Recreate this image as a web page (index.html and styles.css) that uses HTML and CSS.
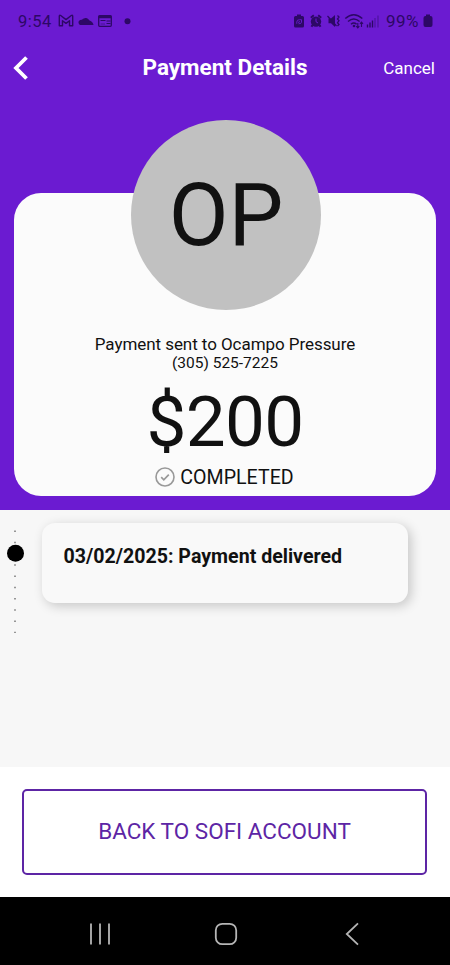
FILE: index.html
```html
<!DOCTYPE html>
<html lang="en">
<head>
<meta charset="utf-8">
<meta name="viewport" content="width=device-width, initial-scale=1">
<title>Payment Details</title>
<link rel="stylesheet" href="styles.css">
</head>
<body>
<div class="screen">
  <section class="hero">
    <div class="status">
      <span class="clock">9:54</span>
      <svg class="status-left" width="76" height="16" viewBox="0 0 76 16" fill="none" stroke="currentColor">
        <path d="M1.300 12.800V3.200q0-1.500 1.400-.7L8 6.600l5.300-4.100q1.400-.8 1.400.7v9.600h-3.200V7.700L8 10.400 4.500 7.700v5.100z" stroke-width="1.400" stroke-linejoin="round"/>
        <path d="M22 12a2.800 2.800 0 0 1-.6-4.600 3 3 0 0 1 2.600-.6 4.400 4.400 0 0 1 7.500.8Q35 8.700 35.500 12z" fill="currentColor" stroke="none"/>
        <rect x="40.700" y="2.700" width="12.600" height="10.600" rx="1" stroke-width="1.300"/>
        <path d="M40.500 4h13" stroke-width="2.500"/>
        <path d="M42.500 7.500h5M48.500 10.500h4M48.500 8h4" stroke-width="1.100"/>
        <path d="M42.500 11h4.500" stroke-width="1.100" opacity=".5"/>
        <circle cx="69.500" cy="8.200" r="3" fill="currentColor" stroke="none"/>
      </svg>
      <svg class="status-right" width="88" height="18" viewBox="0 0 88 18" fill="none" stroke="currentColor">
        <path d="M3 4V2.500h4V4h1.500q1.500 0 1.500 1.500v8.500q0 1.500-1.500 1.500h-7Q0 15.500 0 14V5.500Q0 4 1.500 4z" fill="currentColor" stroke="none"/>
        <path d="M2.800 11.800V10q0-2.300 2.700-2.300h2v2.500q0 1.600-3 1.600M4 10.500l2-1" stroke="#6b1bd1" stroke-width=".9"/>
        <circle cx="22" cy="9.600" r="5.200" fill="currentColor" stroke="none"/>
        <path d="M16.800 5.700l3-2.400M27.200 5.700l-3-2.400M18.500 13l-1 1.800M25.500 13l1 1.800" stroke-width="2"/>
        <path d="M22 6.500v3.200l2 1.300" stroke="#6b1bd1" stroke-width="1"/>
        <path d="M34.500 6.500H37l4-3.500v12l-4-3.700h-2.500z" fill="currentColor" stroke="none"/>
        <path d="M33.500 4l9 10" stroke-width="1.200"/>
        <path d="M43.500 3.500 45 5l-1.500 2L45 8.700l-1.500 2L45 12.500 43.500 14" stroke-width="1.300"/>
        <path d="M51.300 6.500q8.500-7.500 17 0M54 9.500q5.800-5 11.600 0M57 12.200q2.800-2.400 5.600 0" stroke-width="1.500"/>
        <circle cx="60" cy="14" r="1.300" fill="currentColor" stroke="none"/>
        <path d="M63.800 11v5m-1.500-1.800 1.500 1.800 1.500-1.800M67.500 15v-5m-1.500 1.800 1.500-1.800 1.500 1.800" stroke-width="1.100"/>
        <path d="M73.500 15.500v-3M76 15.500v-5M78.500 15.500V8.500" stroke-width="1.400"/>
        <path d="M81 15.500V6M84 15.500V3.500" stroke-width="1.400" opacity=".4"/>
      </svg>
      <span class="battery-text">99%</span>
      <svg class="battery" width="10" height="14" viewBox="0 0 10 14"><path d="M3 2V.5h4V2h.5Q9.500 2 9.500 4v7q0 2-2 2h-5Q.5 13 .5 11V4q0-2 2-2z" fill="currentColor"/></svg>
    </div>
    <header class="header">
      <svg class="back" width="18" height="26" viewBox="0 0 18 26"><path d="M14.500 2.500 4 13l10.500 10.500" fill="none" stroke="#fff" stroke-width="3.800"/></svg>
      <h1 class="title">Payment Details</h1>
      <span class="cancel">Cancel</span>
    </header>
    <main class="card">
      <div class="avatar">OP</div>
      <p class="recipient">Payment sent to Ocampo Pressure</p>
      <p class="phone">(305) 525-7225</p>
      <p class="amount">$200</p>
      <div class="state">
        <svg width="20" height="20" viewBox="0 0 20 20" fill="none" stroke="#999"><circle cx="10" cy="10" r="9" stroke-width="1.600"/><path d="m6.200 10.200 2.600 2.600 5-5.200" stroke-width="1.700"/></svg>
        <span class="state-text">COMPLETED</span>
      </div>
    </main>
  </section>
  <section class="timeline">
    <svg class="track" width="18" height="110" viewBox="0 0 18 110">
      <path d="M9 3.500V106" stroke="#777" stroke-width="1.500" stroke-dasharray="1.500 9.750"/>
      <circle cx="9.500" cy="26.300" r="8.500"/>
    </svg>
    <article class="event"><span class="event-text">03/02/2025: Payment delivered</span></article>
  </section>
  <footer class="footer">
    <button class="action"><span class="action-text">BACK TO SOFI ACCOUNT</span></button>
  </footer>
  <nav class="nav">
    <svg width="22" height="24" viewBox="0 0 22 24" fill="none" stroke="#b5b5b5" stroke-width="1.800"><path d="M2 1.500v21M11 1.500v21M20 1.500v21"/></svg>
    <svg width="24" height="24" viewBox="0 0 24 24" fill="none" stroke="#b5b5b5" stroke-width="1.800"><rect x="1.800" y="1.800" width="20.400" height="20.400" rx="6.500"/></svg>
    <svg width="14" height="24" viewBox="0 0 14 24" fill="none" stroke="#b5b5b5" stroke-width="1.800"><path d="M13 1.300 1.800 12 13 22.700"/></svg>
  </nav>
</div>
</body>
</html>
```
FILE: styles.css
```css
* { box-sizing: border-box; }
body { margin: 0; font-family: Roboto, sans-serif; color: #111; }
p, h1 { margin: 0; font-weight: 400; white-space: nowrap; }
svg { display: block; flex: none; }
span { white-space: nowrap; }
.screen { width: 450px; height: 965px; display: flex; flex-direction: column; overflow: hidden; background: #fff; }
.hero { height: 510px; background: #6b1bd1; padding: 0 14px; }
.status { height: 42px; display: flex; align-items: center; color: #2d0866; padding: 0 3px 0 4px; }
.clock { width: 40px; font-size: 16.500px; letter-spacing: .5px; }
.status-left { margin-right: auto; }
.battery-text { width: 36px; margin: 0 1px 0 4px; letter-spacing: .5px; font-size: 17px; }
.header { height: 52px; display: grid; grid-template-columns: 1fr auto 1fr; align-items: center; color: #fff; padding-bottom: 1px; }
.back { margin-left: -2px; }
.title { font-size: 22.500px; font-weight: 700; line-height: 26px; padding-bottom: 1px; }
.cancel { justify-self: end; font-size: 17px; padding-right: 1px; }
.card { height: 303px; margin-top: 99px; border-radius: 27px; background: #fbfbfb; display: flex; flex-direction: column; align-items: center; }
.avatar { width: 190px; height: 190px; margin: -73px 0 24px 2px; border-radius: 50%; background: #c1c1c1; display: flex; align-items: center; justify-content: center; font-size: 87px; line-height: 1; flex: none; }
.recipient { font-size: 17px; line-height: 20px; letter-spacing: -.06px; }
.phone { font-size: 15.500px; line-height: 18px; }
.amount { font-size: 71px; line-height: 84px; margin-top: 8px; letter-spacing: -.6px; }
.state { display: flex; align-items: center; gap: 5px; height: 26px; margin-left: -1px; }
.state-text { font-size: 19.600px; }
.timeline { height: 257px; background: #f7f7f7; display: flex; align-items: flex-start; padding: 13px 42px 0 6px; gap: 18px; }
.track { margin-top: 4px; }
.event { flex: 1; height: 80px; border-radius: 13px; background: #f9f9f9; box-shadow: 3px 3px 12px rgba(0, 0, 0, .2); padding: 22px 21.500px; line-height: 24px; }
.event-text { font-size: 19.600px; font-weight: 700; }
.footer { height: 130px; padding: 22px; background: #fff; }
.action { display: block; width: 405px; height: 86px; border: 2px solid #5d25a5; border-radius: 5px; background: #fff; color: #5d25a5; font-family: inherit; padding: 0 0 2px; }
.action-text { font-size: 22.500px; }
.nav { height: 68px; background: #000; display: grid; grid-template-columns: repeat(3, 126px); justify-content: center; justify-items: center; align-items: center; padding: 5px 0 0 2px; }
```
